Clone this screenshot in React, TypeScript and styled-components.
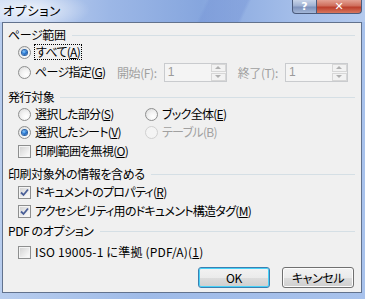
import React from "react";
import styled, { createGlobalStyle, css } from "styled-components";

const GlobalStyle = createGlobalStyle`
  html, body {
    margin: 0;
    padding: 0;
    width: 365px;
    height: 299px;
    overflow: hidden;
    background: #a9c1e8;
  }
  * { box-sizing: border-box; }
`;

const font = `"Noto Sans CJK JP", "Noto Sans", sans-serif`;

const Window = styled.div`
  width: 365px;
  height: 299px;
  display: flex;
  flex-direction: column;
  background: linear-gradient(90deg, #b8cdee 0%, #9fbbe8 40%, #a8c2ec 100%);
  font-family: ${font};
  font-size: 12px;
  font-feature-settings: "palt";
  color: #000;
`;

const TitleBar = styled.div`
  height: 22px;
  flex: none;
  display: flex;
  justify-content: space-between;
  align-items: flex-start;
  background:
    radial-gradient(ellipse 60px 20px at 30px 10px, rgba(255,255,255,0.75), rgba(255,255,255,0) 100%),
    linear-gradient(115deg, transparent 55%, rgba(120,150,215,0.45) 56%, rgba(120,150,215,0.45) 66%, transparent 67%),
    linear-gradient(90deg, #c9d9f3 0%, #9cb7e6 30%, #86a6de 55%, #a3bde9 80%, #b4caee 100%);
`;

const Title = styled.div`
  padding: 3px 0 0 3px;
  font-size: 12.5px;
  line-height: 16px;
  letter-spacing: 0.6px;
`;

const CaptionButtons = styled.div`
  display: flex;
  margin-right: 3px;
`;

const CaptionButton = styled.div<{ $close?: boolean }>`
  width: ${(p) => (p.$close ? 45 : 25)}px;
  height: 14px;
  display: flex;
  align-items: center;
  justify-content: center;
  border: 1px solid #4b5b7c;
  border-top: none;
  color: #fff;
  font-family: "DejaVu Sans", sans-serif;
  font-weight: bold;
  font-size: 11px;
  line-height: 12px;
  ${(p) =>
    p.$close
      ? css`
          border-left: none;
          border-radius: 0 0 4px 0;
          background: linear-gradient(180deg, #e3a193 0%, #cf6e5c 45%, #bb3f2c 55%, #d8765e 100%);
        `
      : css`
          border-radius: 0 0 0 4px;
          background: linear-gradient(180deg, #c7d3e8 0%, #9fb1d2 45%, #7e92bb 55%, #a4b7d8 100%);
        `}
`;

const Client = styled.div`
  flex: 1;
  margin: 0 3px 6px 2px;
  border: 1px solid #62728d;
  background: #f0f0f0;
  padding: 5px 6px 0 5px;
  display: flex;
  flex-direction: column;
`;

const Header = styled.div<{ $top?: number }>`
  display: flex;
  align-items: center;
  flex: none;
  height: 14px;
  line-height: 14px;
  letter-spacing: -0.4px;
  margin-top: ${(p) => p.$top ?? 0}px;
  white-space: nowrap;
  &::after {
    content: "";
    flex: 1;
    height: 1px;
    margin-left: 6px;
    background: #d5dfe5;
  }
`;

const Row = styled.div<{ $top?: number; $height?: number }>`
  display: flex;
  align-items: center;
  flex: none;
  height: ${(p) => p.$height ?? 18}px;
  margin-top: ${(p) => p.$top ?? 0}px;
  padding-left: 10px;
  white-space: nowrap;
`;

const Option = styled.label<{ $width?: number; $disabled?: boolean }>`
  display: flex;
  align-items: center;
  gap: 4px;
  flex: none;
  width: ${(p) => (p.$width ? `${p.$width}px` : "auto")};
  color: ${(p) => (p.$disabled ? "#a0a0a0" : "#000")};
  line-height: 14px;
`;

const Text = styled.span<{ $focus?: boolean; $latin?: boolean }>`
  letter-spacing: ${(p) => (p.$latin ? "0.2px" : "-0.7px")};
  ${(p) =>
    p.$focus &&
    css`
      outline: 1px dotted #000;
      padding: 0 1px;
    `}
`;

const Radio = styled.span<{ $checked?: boolean; $disabled?: boolean }>`
  width: 13px;
  height: 13px;
  flex: none;
  border-radius: 50%;
  border: 1px solid ${(p) => (p.$disabled ? "#d0d0d0" : "#8e8f8f")};
  background: ${(p) =>
    p.$disabled
      ? "#f4f4f4"
      : "radial-gradient(circle at 65% 70%, #ffffff 0%, #f4f4f4 40%, #d8d8d8 100%)"};
  display: flex;
  align-items: center;
  justify-content: center;
  &::after {
    content: "";
    display: ${(p) => (p.$checked ? "block" : "none")};
    width: 5px;
    height: 5px;
    border-radius: 50%;
    background: radial-gradient(circle at 40% 35%, #8fd0ff 0%, #2b7bd6 45%, #0d3e8a 100%);
    box-shadow: 0 0 0 1px #2a63a6;
  }
`;

const Box = styled.span`
  width: 13px;
  height: 13px;
  flex: none;
  border: 1px solid #8e8f8f;
  background: #f4f4f4;
  padding: 1px;
  display: flex;
`;

const BoxInner = styled.span`
  flex: 1;
  background: linear-gradient(135deg, #d4d4d4 0%, #e8e8e8 50%, #fbfbfb 100%);
  display: flex;
  align-items: center;
  justify-content: center;
`;

const Label = styled.span<{ $gap?: number }>`
  color: #a0a0a0;
  letter-spacing: -0.4px;
  margin-left: ${(p) => p.$gap ?? 0}px;
  margin-right: 7px;
`;

const Spin = styled.div`
  width: 63px;
  height: 19px;
  flex: none;
  border: 1px solid #c9cbce;
  background: #f4f4f4;
  display: flex;
  align-items: center;
  color: #9a9a9a;
  padding-left: 3px;
`;

const SpinValue = styled.span`
  flex: 1;
  font-family: "Liberation Sans", sans-serif;
  font-size: 12px;
`;

const SpinButtons = styled.div`
  width: 15px;
  height: 17px;
  display: flex;
  flex-direction: column;
  gap: 1px;
`;

const SpinButton = styled.div<{ $down?: boolean }>`
  flex: 1;
  border: 1px solid #d7d7d7;
  background: #f2f2f2;
  display: flex;
  align-items: center;
  justify-content: center;
  &::after {
    content: "";
    border-left: 3px solid transparent;
    border-right: 3px solid transparent;
    ${(p) =>
      p.$down
        ? "border-top: 3px solid #b0b0b0;"
        : "border-bottom: 3px solid #b0b0b0;"}
  }
`;

const Footer = styled.div`
  display: flex;
  justify-content: flex-end;
  flex: none;
  gap: 12px;
  margin-top: 6px;
  padding-right: 1px;
`;

const Button = styled.button<{ $default?: boolean }>`
  width: 72px;
  height: 21px;
  padding: 0;
  font-family: ${font};
  font-feature-settings: "palt";
  font-size: 12px;
  line-height: 14px;
  letter-spacing: -0.4px;
  color: #000;
  border-radius: 3px;
  border: 1px solid ${(p) => (p.$default ? "#3c7fb1" : "#707070")};
  background: linear-gradient(180deg, #f2f2f2 0%, #ebebeb 50%, #dddddd 51%, #cfcfcf 100%);
  box-shadow: inset 0 0 0 1px ${(p) => (p.$default ? "#48d2f8" : "#fcfcfc")};
`;

const Check = () => (
  <svg width="9" height="9" viewBox="0 0 9 9">
    <path d="M1 4.5 L3.5 7 L8 1.5" fill="none" stroke="#4a5f97" strokeWidth="1.8" />
  </svg>
);

const CheckBox: React.FC<{ checked?: boolean }> = ({ checked }) => (
  <Box>
    <BoxInner>{checked && <Check />}</BoxInner>
  </Box>
);

const SpinBox: React.FC<{ value: string }> = ({ value }) => (
  <Spin>
    <SpinValue>{value}</SpinValue>
    <SpinButtons>
      <SpinButton />
      <SpinButton $down />
    </SpinButtons>
  </Spin>
);

export default function App() {
  return (
    <>
      <GlobalStyle />
      <Window>
        <TitleBar>
          <Title>オプション</Title>
          <CaptionButtons>
            <CaptionButton>?</CaptionButton>
            <CaptionButton $close>✕</CaptionButton>
          </CaptionButtons>
        </TitleBar>
        <Client>
          <Header>ページ範囲</Header>
          <Row $top={1}>
            <Option>
              <Radio $checked />
              <Text $focus>
                すべて(<u>A</u>)
              </Text>
            </Option>
          </Row>
          <Row $height={20} $top={1}>
            <Option $width={99}>
              <Radio />
              <Text>
                ページ指定(<u>G</u>)
              </Text>
            </Option>
            <Label>開始(F):</Label>
            <SpinBox value="1" />
            <Label $gap={11}>終了(T):</Label>
            <SpinBox value="1" />
          </Row>

          <Header $top={8}>発行対象</Header>
          <Row $top={1}>
            <Option $width={127}>
              <Radio />
              <Text>
                選択した部分(<u>S</u>)
              </Text>
            </Option>
            <Option>
              <Radio />
              <Text>
                ブック全体(<u>E</u>)
              </Text>
            </Option>
          </Row>
          <Row>
            <Option $width={127}>
              <Radio $checked />
              <Text>
                選択したシート(<u>V</u>)
              </Text>
            </Option>
            <Option $disabled>
              <Radio $disabled />
              <Text>テーブル(B)</Text>
            </Option>
          </Row>
          <Row $top={1}>
            <Option>
              <CheckBox />
              <Text>
                印刷範囲を無視(<u>O</u>)
              </Text>
            </Option>
          </Row>

          <Header $top={7}>印刷対象外の情報を含める</Header>
          <Row $top={2}>
            <Option>
              <CheckBox checked />
              <Text>
                ドキュメントのプロパティ(<u>R</u>)
              </Text>
            </Option>
          </Row>
          <Row $top={1}>
            <Option>
              <CheckBox checked />
              <Text>
                アクセシビリティ用のドキュメント構造タグ(<u>M</u>)
              </Text>
            </Option>
          </Row>

          <Header $top={4}>PDF のオプション</Header>
          <Row $top={5}>
            <Option>
              <CheckBox />
              <Text $latin>
                ISO 19005-1 に準拠 (PDF/A)(<u>1</u>)
              </Text>
            </Option>
          </Row>

          <Footer>
            <Button $default>OK</Button>
            <Button>キャンセル</Button>
          </Footer>
        </Client>
      </Window>
    </>
  );
}
